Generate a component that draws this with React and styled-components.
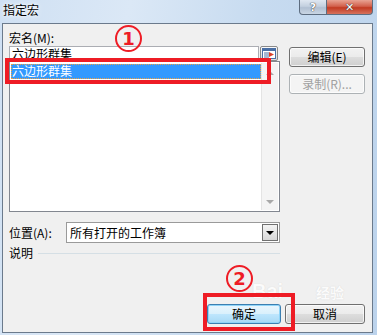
import styled, { createGlobalStyle } from 'styled-components';

const GlobalStyle = createGlobalStyle`
  html, body {
    margin: 0;
    padding: 0;
    background: #c4d9ef;
  }
  body {
    font-family: "Noto Sans CJK SC", "DejaVu Sans", sans-serif;
    font-size: 12px;
    color: #000;
  }
`;

const Window = styled.div`
  position: relative;
  width: 377px;
  height: 335px;
  overflow: hidden;
  display: flex;
  flex-direction: column;
  background: linear-gradient(100deg, #cfe0f3 0%, #dbe8f6 30%, #c7dbf0 60%, #bcd3ec 100%);
`;

const TitleBar = styled.div`
  height: 23px;
  display: flex;
  align-items: flex-start;
  padding-left: 3px;
  padding-right: 4px;
`;

const Title = styled.div`
  flex: 1;
  font-size: 12px;
  line-height: 14px;
  padding-top: 3px;
  color: #000;
  text-shadow: 0 0 6px #fff, 0 0 3px #fff;
`;

const CaptionButton = styled.div`
  width: ${p => p.$w}px;
  height: 15px;
  box-sizing: border-box;
  border: 1px solid #5d6d80;
  border-top: none;
  display: flex;
  align-items: center;
  justify-content: center;
  font-family: "DejaVu Sans", sans-serif;
  font-weight: bold;
  font-size: 11px;
  color: #fff;
  text-shadow: 0 0 1px #333, 0 0 1px #333;
  background: ${p => p.$close
    ? 'linear-gradient(#e8a393 0%, #d2604c 45%, #c23a22 55%, #d6725d 100%)'
    : 'linear-gradient(#dfe7f1 0%, #c3d0df 45%, #b1c0d2 55%, #c9d6e4 100%)'};
  border-radius: ${p => p.$close ? '0 0 4px 0' : '0 0 0 4px'};
  ${p => p.$close && 'border-left: none;'}
`;

const Client = styled.div`
  flex: 1;
  margin: 0 4px 2px 2px;
  background: #f0f0f0;
  border: 1px solid #6b7a8c;
  display: flex;
  flex-direction: column;
  padding: 7px 7px 8px 6px;
`;

const Top = styled.div`
  display: flex;
  gap: 9px;
`;

const LeftCol = styled.div`
  width: 271px;
  display: flex;
  flex-direction: column;
`;

const RightCol = styled.div`
  display: flex;
  flex-direction: column;
  gap: 7px;
  padding-top: 16px;
`;

const Label = styled.div`
  line-height: 14px;
  height: 15px;
  white-space: nowrap;
`;

const NameRow = styled.div`
  display: flex;
  height: 15px;
  margin-right: 2px;
`;

const NameInput = styled.div`
  flex: 1;
  box-sizing: border-box;
  background: #fff;
  border: 1px solid #abadb3;
  border-bottom: none;
  padding-left: 2px;
  line-height: 14px;
  overflow: hidden;
`;

const PickButton = styled.div`
  width: 18px;
  height: 15px;
  box-sizing: border-box;
  border: 1px solid #8a8a8a;
  border-radius: 2px;
  background: linear-gradient(#fafafa, #dcdcdc);
  display: flex;
  align-items: center;
  justify-content: center;
  margin-left: 1px;
`;

const ListBox = styled.div`
  height: 151px;
  box-sizing: border-box;
  border: 1px solid #828790;
  background: #fff;
  display: flex;
  padding: 1px;
`;

const ListItems = styled.div`
  flex: 1;
`;

const ListItem = styled.div`
  height: 15px;
  line-height: 14px;
  padding-left: 1px;
  margin-top: 1px;
  box-sizing: border-box;
  background: ${p => p.$selected ? '#3399ff' : 'transparent'};
  color: ${p => p.$selected ? '#fff' : '#000'};
  outline: ${p => p.$selected ? '1px dotted #f0a040' : 'none'};
  outline-offset: -1px;
`;

const ScrollBar = styled.div`
  width: 16px;
  background: #f4f4f4;
  border-left: 1px solid #e4e4e4;
  display: flex;
  flex-direction: column;
  justify-content: space-between;
  align-items: center;
  padding: 8px 0 6px;
`;

const Arrow = styled.div`
  width: 0;
  height: 0;
  border-left: 4px solid transparent;
  border-right: 4px solid transparent;
  ${p => p.$up
    ? 'border-bottom: 4px solid #a8a8a8;'
    : 'border-top: 4px solid #a8a8a8;'}
`;

const LocationRow = styled.div`
  display: flex;
  align-items: center;
  margin-top: 10px;
  height: 21px;
`;

const LocationLabel = styled.div`
  width: 57px;
  line-height: 14px;
`;

const Combo = styled.div`
  flex: 1;
  height: 21px;
  box-sizing: border-box;
  border: 1px solid #9a9a9a;
  background: #fff;
  display: flex;
  align-items: stretch;
`;

const ComboText = styled.div`
  flex: 1;
  line-height: 19px;
  padding-left: 3px;
`;

const ComboButton = styled.div`
  width: 16px;
  box-sizing: border-box;
  margin: 1px;
  border: 1px solid #707070;
  background: linear-gradient(#f4f4f4, #d8d8d8);
  display: flex;
  align-items: center;
  justify-content: center;
`;

const ComboArrow = styled.div`
  width: 0;
  height: 0;
  border-left: 4px solid transparent;
  border-right: 4px solid transparent;
  border-top: 4px solid #000;
`;

const DescRow = styled.div`
  display: flex;
  align-items: center;
  gap: 5px;
  margin-top: 3px;
  line-height: 14px;
`;

const Rule = styled.div`
  flex: 1;
  height: 1px;
  background: #d5dfe5;
`;

const Button = styled.div`
  width: ${p => p.$w || 76}px;
  height: 20px;
  box-sizing: border-box;
  border: 1px solid ${p => p.$disabled ? '#adb2b5' : p.$default ? '#3c7fb1' : '#707070'};
  border-radius: 3px;
  background: ${p => p.$disabled
    ? '#f4f4f4'
    : p.$default
      ? 'linear-gradient(#eaf6fd 0%, #d9f0fc 50%, #bee6fd 51%, #a7d9f5 100%)'
      : 'linear-gradient(#f2f2f2 0%, #ebebeb 50%, #dddddd 51%, #cfcfcf 100%)'};
  box-shadow: inset 0 0 0 1px ${p => p.$default ? '#8fd4f8' : 'rgba(255,255,255,0.7)'};
  color: ${p => p.$disabled ? '#a0a0a0' : '#000'};
  display: flex;
  align-items: center;
  justify-content: center;
  line-height: 14px;
  white-space: nowrap;
`;

const Bottom = styled.div`
  margin-top: auto;
  display: flex;
  justify-content: flex-end;
  gap: 4px;
`;

const RedBox = styled.div`
  position: absolute;
  left: ${p => p.$x}px;
  top: ${p => p.$y}px;
  width: ${p => p.$w}px;
  height: ${p => p.$h}px;
  box-sizing: border-box;
  border: 4px solid #ee1c25;
  pointer-events: none;
`;

const Badge = styled.div`
  position: absolute;
  left: ${p => p.$x}px;
  top: ${p => p.$y}px;
  width: 27px;
  height: 27px;
  box-sizing: border-box;
  border: 2px solid #ee1c25;
  border-radius: 50%;
  color: #ee1c25;
  font-family: "DejaVu Sans", sans-serif;
  font-weight: bold;
  font-size: 18px;
  line-height: 23px;
  text-align: center;
`;

const Watermark = styled.div`
  position: absolute;
  left: ${p => p.$x}px;
  top: ${p => p.$y}px;
  color: #ffffff;
  opacity: 0.75;
  font-family: ${p => p.$cjk ? '"Noto Sans CJK SC", sans-serif' : '"Liberation Sans", sans-serif'};
  font-weight: bold;
  font-size: ${p => p.$size}px;
  text-shadow: 0 0 1px #c8c8c8;
  pointer-events: none;
  white-space: nowrap;
`;

const PickIcon = () => (
  <svg width="14" height="11" viewBox="0 0 14 11">
    <rect x="0.5" y="0.5" width="13" height="10" fill="#fff" stroke="#4a6fa5" />
    <rect x="1" y="1" width="12" height="2" fill="#4a6fa5" />
    <line x1="2" y1="5" x2="7" y2="5" stroke="#4a6fa5" />
    <line x1="2" y1="7" x2="7" y2="7" stroke="#4a6fa5" />
    <line x1="2" y1="9" x2="7" y2="9" stroke="#4a6fa5" />
    <path d="M7 4 L12 6.5 L7 9 Z" fill="#d9412b" />
  </svg>
);

export default function App() {
  return (
    <>
      <GlobalStyle />
      <Window>
        <TitleBar>
          <Title>指定宏</Title>
          <CaptionButton $w={28}>?</CaptionButton>
          <CaptionButton $w={46} $close>✕</CaptionButton>
        </TitleBar>
        <Client>
          <Top>
            <LeftCol>
              <Label>宏名(M):</Label>
              <NameRow>
                <NameInput>六边形群集</NameInput>
                <PickButton><PickIcon /></PickButton>
              </NameRow>
              <ListBox>
                <ListItems>
                  <ListItem $selected>六边形群集</ListItem>
                </ListItems>
                <ScrollBar>
                  <Arrow $up />
                  <Arrow />
                </ScrollBar>
              </ListBox>
              <LocationRow>
                <LocationLabel>位置(A):</LocationLabel>
                <Combo>
                  <ComboText>所有打开的工作簿</ComboText>
                  <ComboButton><ComboArrow /></ComboButton>
                </Combo>
              </LocationRow>
              <DescRow>
                说明
                <Rule />
              </DescRow>
            </LeftCol>
            <RightCol>
              <Button>编辑(E)</Button>
              <Button $disabled>录制(R)...</Button>
            </RightCol>
          </Top>
          <Bottom>
            <Button $w={74} $default>确定</Button>
            <Button $w={80}>取消</Button>
          </Bottom>
        </Client>

        <Watermark $x={252} $y={280} $size={20}>Bai</Watermark>
        <Watermark $x={316} $y={282} $size={14} $cjk>经验</Watermark>

        <RedBox $x={5} $y={58} $w={266} $h={26} />
        <RedBox $x={203} $y={293} $w={92} $h={38} />
        <Badge $x={115} $y={25}>1</Badge>
        <Badge $x={226} $y={265}>2</Badge>
      </Window>
    </>
  );
}
